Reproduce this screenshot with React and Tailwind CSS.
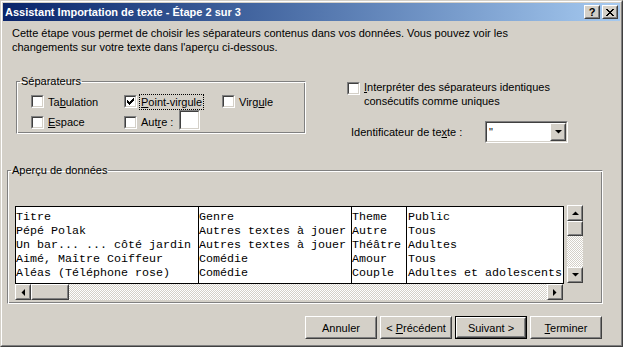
import React from 'react';

const ui = { fontFamily: '"Liberation Sans", Arial, sans-serif' };
const mono = { fontFamily: '"Liberation Mono", "Courier New", monospace' };

function Sunken({ className = '', inner = '', children }) {
  return (
    <div className={`border border-t-[#808080] border-l-[#808080] border-b-white border-r-white ${className}`}>
      <div className={`h-full w-full border border-t-[#404040] border-l-[#404040] border-b-[#d4d0c8] border-r-[#d4d0c8] ${inner}`}>
        {children}
      </div>
    </div>
  );
}

function Raised({ className = '', inner = '', children }) {
  return (
    <div className={`border border-t-white border-l-white border-b-[#404040] border-r-[#404040] bg-[#d4d0c8] ${className}`}>
      <div className={`h-full w-full border border-t-[#d4d0c8] border-l-[#d4d0c8] border-b-[#808080] border-r-[#808080] flex items-center justify-center ${inner}`}>
        {children}
      </div>
    </div>
  );
}

function CheckBox({ checked }) {
  return (
    <Sunken className="w-[13px] h-[13px] shrink-0" inner="bg-white flex items-center justify-center">
      {checked && (
        <svg width="7" height="7" viewBox="0 0 7 7" shapeRendering="crispEdges">
          <rect x="6" y="0" width="1" height="1" />
          <rect x="5" y="1" width="2" height="1" />
          <rect x="0" y="2" width="1" height="1" />
          <rect x="4" y="2" width="3" height="1" />
          <rect x="0" y="3" width="2" height="1" />
          <rect x="3" y="3" width="3" height="1" />
          <rect x="0" y="4" width="5" height="1" />
          <rect x="1" y="5" width="3" height="1" />
          <rect x="2" y="6" width="1" height="1" />
        </svg>
      )}
    </Sunken>
  );
}

function Arrow({ dir }) {
  const pts = {
    up: '0,4 7,4 3.5,0.5',
    down: '0,0 7,0 3.5,3.5',
    left: '4,0 4,7 0.5,3.5',
    right: '0,0 0,7 3.5,3.5',
  }[dir];
  const vertical = dir === 'up' || dir === 'down';
  return (
    <svg width={vertical ? 7 : 4} height={vertical ? 4 : 7} viewBox={vertical ? '0 0 7 4' : '0 0 4 7'}>
      <polygon points={pts} fill="#000" />
    </svg>
  );
}

function Check({ label, checked, focus }) {
  return (
    <div className="flex items-center gap-[3px]">
      <CheckBox checked={checked} />
      <span className={`px-[1px] leading-[14px] ${focus ? 'outline outline-1 outline-dotted outline-black' : ''}`}>{label}</span>
    </div>
  );
}

function Button({ children, def }) {
  const btn = (
    <Raised className="w-full h-full">
      <span className="leading-[14px]">{children}</span>
    </Raised>
  );
  return def ? (
    <div className="w-[72px] h-[23px] border border-black">{btn}</div>
  ) : (
    <div className="w-[72px] h-[23px]">{btn}</div>
  );
}

const track = 'bg-[repeating-conic-gradient(#ffffff_0%_25%,#d4d0c8_0%_50%)] bg-[length:2px_2px]';

const rows = [
  ['Titre', 'Genre', 'Theme', 'Public'],
  ['Pépé Polak', 'Autres textes à jouer', 'Autre', 'Tous'],
  ['Un bar... ... côté jardin', 'Autres textes à jouer', 'Théâtre', 'Adultes'],
  ['Aimé, Maître Coiffeur', 'Comédie', 'Amour', 'Tous'],
  ['Aléas (Téléphone rose)', 'Comédie', 'Couple', 'Adultes et adolescents'],
];

const cols = [
  { w: 'w-[183px] border-r border-black', i: 0 },
  { w: 'w-[153px] border-r border-black', i: 1 },
  { w: 'w-[55px] border-r border-black', i: 2 },
  { w: 'flex-1 pl-[1px]', i: 3 },
];

export default function App() {
  return (
    <div className="w-[623px] h-[347px] bg-[#d4d0c8] text-[11px] text-black overflow-hidden" style={ui}>
      <div className="w-full h-full border border-t-[#d4d0c8] border-l-[#d4d0c8] border-b-[#404040] border-r-[#404040]">
        <div className="w-full h-full border border-t-white border-l-white border-b-[#808080] border-r-[#808080] p-[1px] flex flex-col">
          {/* Title bar */}
          <div className="h-[18px] shrink-0 flex items-center bg-gradient-to-r from-[#0a246a] to-[#a6caf0] pl-[2px] pr-[2px]">
            <span className="text-white font-bold text-[11px] leading-[14px] flex-1">Assistant Importation de texte - Étape 2 sur 3</span>
            <Raised className="w-[16px] h-[14px]">
              <span className="font-bold text-[11px] leading-[10px]">?</span>
            </Raised>
            <Raised className="w-[16px] h-[14px] ml-[2px]">
              <svg width="8" height="7" viewBox="0 0 8 7" shapeRendering="crispEdges">
                <path d="M0 0h2v1h-2z M6 0h2v1h-2z M1 1h2v1h-2z M5 1h2v1h-2z M2 2h4v1h-4z M3 3h2v1h-2z M2 4h4v1h-4z M1 5h2v1h-2z M5 5h2v1h-2z M0 6h2v1h-2z M6 6h2v1h-2z" fill="#000" />
              </svg>
            </Raised>
          </div>

          {/* Description */}
          <p className="mt-[5px] ml-[9px] leading-[14px]">
            Cette étape vous permet de choisir les séparateurs contenus dans vos données. Vous pouvez voir les
            <br />
            changements sur votre texte dans l'aperçu ci-dessous.
          </p>

          {/* Separators + options */}
          <div className="h-[109px] shrink-0 flex items-start">
            <fieldset className="mt-[20px] ml-[13px] w-[290px] h-[60px] border border-t-[#808080] border-l-[#808080] border-b-white border-r-white shadow-[inset_1px_1px_0_#fff,inset_-1px_-1px_0_#808080]">
              <legend className="ml-[3px] px-[1px] leading-[14px]">Séparateurs</legend>
              <div className="pl-[14px] pt-[7px] flex flex-col gap-[7px]">
                <div className="flex h-[13px] items-center">
                  <div className="w-[93px]"><Check label={<>Ta<u>b</u>ulation</>} /></div>
                  <div className="w-[98px]"><Check label={<><u>P</u>oint-virgule</>} checked focus /></div>
                  <Check label={<>Virg<u>u</u>le</>} />
                </div>
                <div className="flex h-[13px] items-start">
                  <div className="w-[93px]"><Check label={<><u>E</u>space</>} /></div>
                  <div className="flex items-start">
                    <Check label={<>Aut<u>r</u>e :</>} />
                    <Sunken className="w-[21px] h-[20px] ml-[5px] -mt-[5px]" inner="bg-white" />
                  </div>
                </div>
              </div>
            </fieldset>

            <div className="ml-[41px] mt-[26px] flex flex-col">
              <div className="flex items-start gap-[3px]">
                <div className="mt-[2px]"><CheckBox /></div>
                <span className="leading-[14px] px-[1px]">
                  <u>I</u>nterpréter des séparateurs identiques
                  <br />
                  consécutifs comme uniques
                </span>
              </div>
              <div className="flex items-center mt-[13px] ml-[4px]">
                <span className="w-[134px] leading-[14px]">Identificateur de te<u>x</u>te :</span>
                <Sunken className="w-[83px] h-[22px]" inner="bg-white flex items-center">
                  <span className="flex-1 pl-[2px] leading-[14px]">"</span>
                  <Raised className="w-[16px] h-[18px]">
                    <Arrow dir="down" />
                  </Raised>
                </Sunken>
              </div>
            </div>
          </div>

          {/* Preview */}
          <fieldset className="ml-[4px] w-[596px] h-[141px] shrink-0 border border-t-[#808080] border-l-[#808080] border-b-white border-r-white shadow-[inset_1px_1px_0_#fff,inset_-1px_-1px_0_#808080]">
            <legend className="ml-[3px] px-[1px] leading-[14px]">Aperçu de données</legend>
            <div className="mt-[28px] ml-[7px] flex items-start">
              <div className="flex flex-col">
                <div className="mt-[1px] w-[549px] h-[78px] border border-black bg-white flex pt-[3px] overflow-hidden text-[11.67px] leading-[14px]" style={mono}>
                  {cols.map((c) => (
                    <div key={c.i} className={`${c.w} h-[80px] -mt-[3px] pt-[3px] whitespace-pre`}>
                      {rows.map((r, j) => (
                        <div key={j} className="h-[14px]">{r[c.i]}</div>
                      ))}
                    </div>
                  ))}
                </div>
                <div className={`w-[548px] h-[16px] flex ${track}`}>
                  <Raised className="w-[16px] h-[16px]"><Arrow dir="left" /></Raised>
                  <Raised className="w-[38px] h-[16px]" />
                  <div className="flex-1" />
                  <Raised className="w-[16px] h-[16px]"><Arrow dir="right" /></Raised>
                </div>
              </div>
              <div className={`ml-[3px] w-[16px] h-[78px] flex flex-col ${track}`}>
                <Raised className="w-[16px] h-[16px]"><Arrow dir="up" /></Raised>
                <Raised className="w-[16px] h-[15px]" />
                <div className="flex-1" />
                <Raised className="w-[16px] h-[16px]"><Arrow dir="down" /></Raised>
              </div>
            </div>
          </fieldset>

          {/* Buttons */}
          <div className="mt-[12px] pr-[18px] flex justify-end gap-[3px]">
            <Button>Annuler</Button>
            <Button>&lt; <u>P</u>récédent</Button>
            <Button def>Suivant &gt;</Button>
            <Button><u>T</u>erminer</Button>
          </div>
        </div>
      </div>
    </div>
  );
}
